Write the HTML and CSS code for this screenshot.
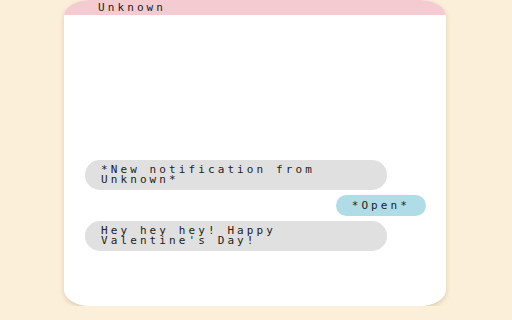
FILE: index.html
```html
<!DOCTYPE html>
<html lang="en">
<head>
  <meta charset="UTF-8">
  <title>Chat</title>
  <link rel="stylesheet" href="styles.css">
</head>
<body>
  <div class="telefono">

    <!-- Encabezado -->
    <header class="cabecera">Unknown</header>

    <!-- Mensajes -->
    <div class="mensajes">
      <div class="burbuja recibida">*New notification from Unknown*</div>
      <div class="burbuja enviada">*Open*</div>
      <div class="burbuja recibida">Hey hey hey! Happy Valentine's Day!</div>
    </div>
  </div>
</body>
</html>
```

FILE: styles.css
```css
body {
  margin: 0;
  background: #fcefd9;
  font-family: "DejaVu Sans Mono", monospace;
  font-size: 11px;
  letter-spacing: 3.1px;
  color: #222;
}

.telefono {
  width: 382px;
  height: 306px;
  margin-left: 64px;
  background: #fff;
  border-radius: 26px / 16px;
  box-shadow: 0 2px 5px rgba(150, 120, 80, 0.3);
  overflow: hidden;
  display: flex;
  flex-direction: column;
}

.cabecera {
  height: 15px;
  line-height: 15px;
  padding-left: 34px;
  background: #f5cbd2;
  flex-shrink: 0;
}

.mensajes {
  flex: 1;
  display: flex;
  flex-direction: column;
  justify-content: flex-end;
  gap: 5px;
  padding: 0 20px 55px 21px;
}

.burbuja {
  padding: 5px 16px;
  line-height: 10px;
  border-radius: 15px;
}

.recibida {
  width: 270px;
  background: #e0e0e0;
  align-self: flex-start;
}

.enviada {
  background: #afdce6;
  align-self: flex-end;
  padding-top: 5.5px;
  padding-bottom: 5.5px;
}
```
